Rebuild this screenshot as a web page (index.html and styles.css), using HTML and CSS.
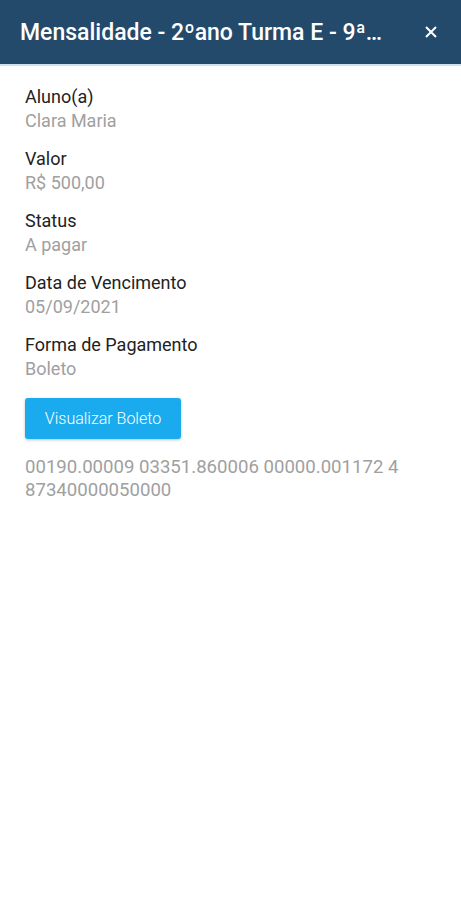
FILE: index.html
```html
<!DOCTYPE html>
<html lang="pt-BR">
<head>
  <meta charset="UTF-8" />
  <meta name="viewport" content="width=device-width, initial-scale=1" />
  <title>Mensalidade</title>
  <link rel="stylesheet" href="styles.css">
</head>
<body>

<header class="topbar">
  <h1 class="title">Mensalidade - 2ºano Turma E - 9ª parcela</h1>
  <button class="close" aria-label="Fechar">
    <svg width="12" height="12" viewBox="0 0 12 12"><path d="M1 1 L11 11 M11 1 L1 11" stroke="#fff" stroke-width="2" fill="none"/></svg>
  </button>
</header>

<main class="content">
  <div class="field">
    <div class="label">Aluno(a)</div>
    <div class="value">Clara Maria</div>
  </div>
  <div class="field">
    <div class="label">Valor</div>
    <div class="value">R$ 500,00</div>
  </div>
  <div class="field">
    <div class="label">Status</div>
    <div class="value">A pagar</div>
  </div>
  <div class="field">
    <div class="label">Data de Vencimento</div>
    <div class="value">05/09/2021</div>
  </div>
  <div class="field">
    <div class="label">Forma de Pagamento</div>
    <div class="value">Boleto</div>
  </div>

  <button class="btn">Visualizar Boleto</button>

  <p class="barcode">00190.00009 03351.860006 00000.001172 4 87340000050000</p>
</main>

</body>
</html>
```

FILE: styles.css
```css
body {
  margin: 0;
  font-family: Roboto, 'Noto Sans', sans-serif;
  background: #fff;
  color: #212121;
}

.topbar {
  height: 66px;
  background: #234a6b;
  border-bottom: 2px solid #cfe2f1;
  box-sizing: border-box;
  display: flex;
  align-items: center;
  padding: 0 24px 0 20px;
}

.title {
  margin: 0;
  font-size: 23px;
  font-weight: 500;
  color: #fff;
  white-space: nowrap;
  overflow: hidden;
  text-overflow: ellipsis;
  width: 366px;
}

.close {
  margin-left: auto;
  background: none;
  border: none;
  padding: 0;
  width: 12px;
  height: 12px;
  display: flex;
  cursor: pointer;
}

.content {
  padding: 19px 25px;
}

.field {
  margin-bottom: 14px;
  font-size: 18px;
  line-height: 24px;
}

.label {
  color: #222;
}

.value {
  color: #a0a0a0;
}

.btn {
  margin-top: 3px;
  width: 156px;
  height: 41px;
  background: #1aabef;
  color: #fff;
  border: none;
  border-radius: 3px;
  font-family: inherit;
  font-size: 16px;
  font-weight: 300;
  box-shadow: 0 1px 3px rgba(0, 0, 0, 0.25);
  cursor: pointer;
}

.barcode {
  margin: 17px 0 0;
  font-size: 18.6px;
  line-height: 23px;
  color: #a0a0a0;
}
```
